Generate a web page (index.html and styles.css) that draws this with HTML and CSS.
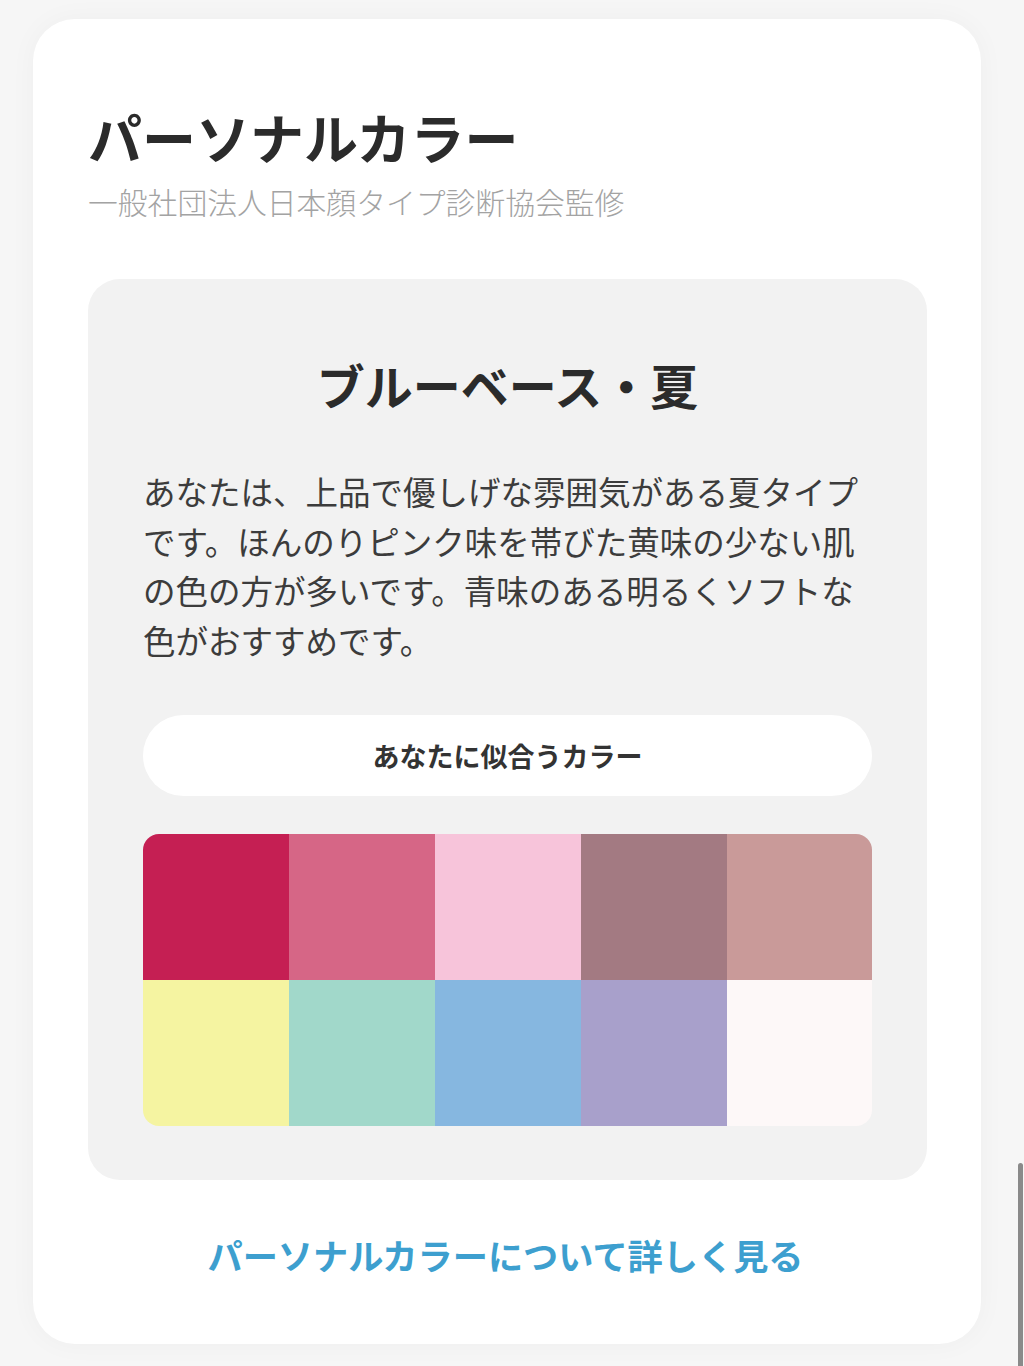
FILE: index.html
```html
<!DOCTYPE html>
<html lang="ja">
<head>
<meta charset="utf-8">
<title>パーソナルカラー</title>
<link rel="stylesheet" href="styles.css">
</head>
<body>
<main class="card">
  <h1 class="title">パーソナルカラー</h1>
  <p class="subtitle">一般社団法人日本顔タイプ診断協会監修</p>
  <section class="panel">
    <h2 class="type">ブルーベース・夏</h2>
    <p class="desc">あなたは、上品で優しげな雰囲気がある夏タイプです。ほんのりピンク味を帯びた黄味の少ない肌の色の方が多いです。青味のある明るくソフトな色がおすすめです。</p>
    <div class="pill">あなたに似合うカラー</div>
    <div class="swatches">
      <div class="sw c1"></div>
      <div class="sw c2"></div>
      <div class="sw c3"></div>
      <div class="sw c4"></div>
      <div class="sw c5"></div>
      <div class="sw c6"></div>
      <div class="sw c7"></div>
      <div class="sw c8"></div>
      <div class="sw c9"></div>
      <div class="sw c10"></div>
    </div>
  </section>
  <a class="more" href="#">パーソナルカラーについて詳しく見る</a>
</main>
<div class="scrollbar"></div>
</body>
</html>
```

FILE: styles.css
```css
* { box-sizing: border-box; }
html, body { margin: 0; padding: 0; }
body {
  background: #f6f6f6;
  font-family: "Noto Sans CJK JP", "Noto Sans", sans-serif;
  color: #2b2b2b;
  height: 1366px;
  overflow: hidden;
}
.card {
  margin: 19px 43px 0 33px;
  width: 948px;
  background: #ffffff;
  border-radius: 42px;
  box-shadow: 0 0 28px rgba(0, 0, 0, 0.035);
  padding: 85px 54px 65px 55px;
  display: flex;
  flex-direction: column;
}
.title {
  margin: 0;
  font-size: 54px;
  line-height: 65px;
  font-weight: 700;
  color: #2b2b2b;
}
.subtitle {
  margin: 11px 0 0 0;
  font-size: 29.8px;
  line-height: 43px;
  font-weight: 300;
  color: #a3a3a3;
}
.panel {
  margin-top: 56px;
  background: #f2f2f2;
  border-radius: 32px;
  padding: 75px 55px 54px 55px;
  display: flex;
  flex-direction: column;
}
.type {
  margin: 0;
  text-align: center;
  font-size: 48px;
  line-height: 61px;
  font-weight: 700;
  color: #2b2b2b;
}
.desc {
  margin: 51px 0 0 0;
  font-size: 32.5px;
  line-height: 49.5px;
  font-weight: 400;
  color: #3c3c3c;
}
.pill {
  margin-top: 51px;
  height: 81px;
  border-radius: 41px;
  background: #ffffff;
  display: flex;
  align-items: center;
  justify-content: center;
  font-size: 27px;
  font-weight: 700;
  color: #333333;
}
.swatches {
  margin-top: 38px;
  display: grid;
  grid-template-columns: repeat(5, 146px);
  grid-template-rows: repeat(2, 146px);
  border-radius: 16px;
  overflow: hidden;
}
.c1 { background: #c51f53; }
.c2 { background: #d66686; }
.c3 { background: #f7c4da; }
.c4 { background: #a37a82; }
.c5 { background: #c99a99; }
.c6 { background: #f5f4a1; }
.c7 { background: #a1d8ca; }
.c8 { background: #86b7e0; }
.c9 { background: #a8a0cb; }
.c10 { background: #fdf8f8; }
.more {
  margin-top: 51px;
  padding-right: 4px;
  text-align: center;
  font-size: 35.2px;
  line-height: 48px;
  font-weight: 700;
  color: #3d9fcf;
  text-decoration: none;
}
.scrollbar {
  position: fixed;
  right: 1px;
  top: 1163px;
  width: 5px;
  height: 210px;
  background: #8a8a8a;
  border-radius: 3px;
}
```
